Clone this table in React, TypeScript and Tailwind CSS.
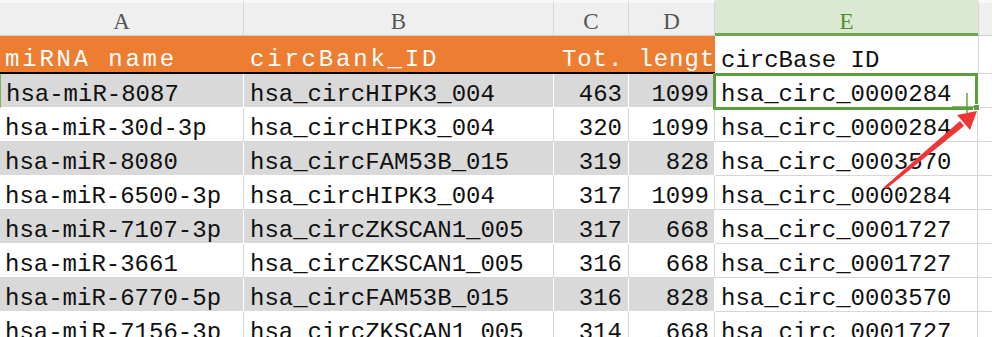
import React from 'react';

const cols = ['A', 'B', 'C', 'D', 'E'];

const rows = [
  ['hsa-miR-8087', 'hsa_circHIPK3_004', '463', '1099', 'hsa_circ_0000284'],
  ['hsa-miR-30d-3p', 'hsa_circHIPK3_004', '320', '1099', 'hsa_circ_0000284'],
  ['hsa-miR-8080', 'hsa_circFAM53B_015', '319', '828', 'hsa_circ_0003570'],
  ['hsa-miR-6500-3p', 'hsa_circHIPK3_004', '317', '1099', 'hsa_circ_0000284'],
  ['hsa-miR-7107-3p', 'hsa_circZKSCAN1_005', '317', '668', 'hsa_circ_0001727'],
  ['hsa-miR-3661', 'hsa_circZKSCAN1_005', '316', '668', 'hsa_circ_0001727'],
  ['hsa-miR-6770-5p', 'hsa_circFAM53B_015', '316', '828', 'hsa_circ_0003570'],
  ['hsa-miR-7156-3p', 'hsa_circZKSCAN1_005', '314', '668', 'hsa_circ_0001727'],
];

const mono = "font-['Liberation_Mono',monospace]";

const App: React.FC = () => {
  return (
    <div className={`relative w-[992px] h-[337px] overflow-hidden bg-white text-[#111] ${mono}`}>
      <div className="grid grid-cols-[244px_310px_75px_86px_263px_1fr]">
        {/* column letters */}
        {cols.map(c =>
          c === 'E' ? (
            <div
              key={c}
              className="h-[36px] flex items-end justify-center bg-[#dbe9d3] border-b-[3px] border-[#6aa84f] text-[#4f8f2f] text-[23px] leading-none font-['Liberation_Serif',serif]"
            >
              {c}
            </div>
          ) : (
            <div
              key={c}
              className="h-[36px] flex items-end justify-center bg-[#efefef] border-t-[3px] border-t-[#f8f8f8] border-r border-r-[#d6d6d6] border-b border-b-[#d0d0d0] text-[#555] text-[23px] leading-none pb-[2px] font-['Liberation_Serif',serif]"
            >
              {c}
            </div>
          )
        )}
        <div className="h-[36px] bg-[#efefef] border-l border-l-[#d6d6d6] border-t-[3px] border-t-[#f8f8f8] border-b border-b-[#d0d0d0]" />

        {/* header row */}
        <div className="h-[38px] flex items-end bg-[#ed7d31] border-b-2 border-black text-white text-[24px] leading-none pl-[5px] tracking-[2.8px] whitespace-nowrap">
          miRNA name
        </div>
        <div className="h-[38px] flex items-end bg-[#ed7d31] border-b-2 border-black text-white text-[24px] leading-none pl-[6px] tracking-[2.8px] whitespace-nowrap">
          circBank_ID
        </div>
        <div className="col-span-2 h-[38px] flex items-end bg-[#ed7d31] border-b-2 border-black text-white text-[24px] leading-none pl-[8px] tracking-[0.9px] whitespace-nowrap overflow-hidden">
          Tot. length
        </div>
        <div className="h-[38px] flex items-end bg-white border-b border-[#d6d6d6] text-[24px] leading-none pl-[6px] whitespace-nowrap">
          circBase ID
        </div>
        <div className="h-[38px] border-l border-[#d6d6d6] border-b border-b-[#d6d6d6]" />

        {/* data rows */}
        {rows.map((r, i) => {
          const shaded = i % 2 === 0;
          const cell = shaded
            ? 'bg-[#d9d9d9] border-r border-b border-white'
            : 'bg-white border-r border-b border-[#d6d6d6]';
          return (
            <React.Fragment key={i}>
              <div className={`h-[34px] flex items-end text-[24px] leading-none pl-[5px] whitespace-nowrap ${cell} ${i === 0 ? 'border-l border-l-[#7cb45c]' : ''}`}>
                {r[0]}
              </div>
              <div className={`h-[34px] flex items-end text-[24px] leading-none pl-[6px] whitespace-nowrap ${cell}`}>
                {r[1]}
              </div>
              <div className={`h-[34px] flex items-end justify-end text-[24px] leading-none pr-[6px] ${cell}`}>
                {r[2]}
              </div>
              <div className={`h-[34px] flex items-end justify-end text-[24px] leading-none pr-[5px] ${cell}`}>
                {r[3]}
              </div>
              <div className="h-[34px] flex items-end text-[24px] leading-none pl-[6px] whitespace-nowrap bg-white border-r border-b border-[#d6d6d6]">
                {r[4]}
              </div>
              <div className="h-[34px] bg-white border-b border-[#d6d6d6]" />
            </React.Fragment>
          );
        })}
      </div>

      {/* active cell */}
      <div className="absolute left-[713px] top-[73px] w-[265px] h-[37px] border-[3px] border-[#5b9e3b]" />
      <div className="absolute left-[973px] top-[104px] w-[7px] h-[7px] bg-[#5b9e3b] border border-white" />
      <div className="absolute left-[966px] top-[93px] w-[2px] h-[20px] bg-[#5b9e3b]/70" />
      <div className="absolute left-[952px] top-[106px] w-[24px] h-[2px] bg-[#5b9e3b]/70" />

      {/* annotation arrow */}
      <svg className="absolute inset-0 pointer-events-none" width="992" height="337" viewBox="0 0 992 337">
        <polygon points="884,187 886,189 964,126 960,121" fill="#ef3535" />
        <polygon points="977,111 970,130 957,115" fill="#ef3535" />
      </svg>
    </div>
  );
};

export default App;
